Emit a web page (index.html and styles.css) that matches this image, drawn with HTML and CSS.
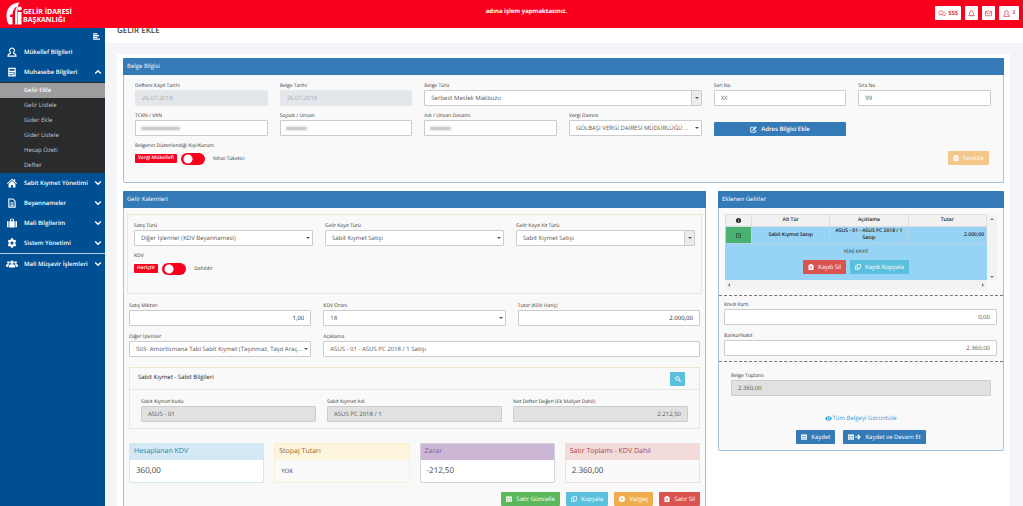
FILE: index.html
```html
<!DOCTYPE html>
<html lang="tr">
<head>
<meta charset="utf-8">
<title>Gelir Ekle</title>
<link rel="stylesheet" href="styles.css">
</head>
<body>
<svg class="defs" aria-hidden="true">
  <symbol id="user" viewBox="0 0 16 16"><path d="M8 1.5a4 4 0 0 1 2.6 7c-.5.5-.4 1.400 .4 1.700 2 .7 3.500 1.500 3.500 4.300h-13c0-2.800 1.500-3.600 3.500-4.300.8-.3.9-1.200.4-1.700A4 4 0 0 1 8 1.500z" fill="none" stroke="currentColor" stroke-width="1.800"/></symbol>
  <symbol id="calc" viewBox="0 0 16 16"><path fill="currentColor" fill-rule="evenodd" d="M2 1h12v14H2zM4 3v3h8V3zM4 8v1.500h2V8zm3 0v1.500h2V8zM4 11.500V13h5v-1.500zM10.500 8v5H12V8z"/></symbol>
  <symbol id="home" viewBox="0 0 16 16"><path fill="currentColor" d="M8 1l3 2.700V2h2v3.500L16 8.300l-1 1.100-7-6.200-7 6.200-1-1.100z"/><path fill="currentColor" d="M8 4.600l5.500 4.900V15h-4v-4h-3v4h-4V9.500z"/></symbol>
  <symbol id="doc" viewBox="0 0 16 16"><path fill="none" stroke="currentColor" stroke-width="1.800" d="M3 1.500h6.500L13 5v9.500H3z"/><path stroke="currentColor" stroke-width="1.400" d="M5.500 7.500h5M5.500 9.700h5M5.500 12h5"/></symbol>
  <symbol id="case" viewBox="0 0 16 16"><path fill="currentColor" d="M0 5h2.500v10H1.500Q0 15 0 13.500zM13.500 5H16v8.500q0 1.500-1.500 1.500h-1zM3.700 5H5V2.500Q5 1 6.500 1h3Q11 1 11 2.500V5h1.300v10H3.700zM6.500 5h3V2.500h-3z"/></symbol>
  <symbol id="gear" viewBox="0 0 16 16"><path fill="currentColor" fill-rule="evenodd" d="M6.500 0.500h3l.4 2 1.400.8 2-.7 1.500 2.600L13.300 6.600v2.800l1.500 1.400-1.500 2.600-2-.7-1.400.8-.4 2h-3l-.4-2-1.400-.8-2 .7L1.200 10.800l1.500-1.400V6.600L1.200 5.200l1.500-2.600 2 .7 1.400-.8zM8 5.500a2.500 2.500 0 1 0 0 5 2.500 2.500 0 0 0 0-5z"/></symbol>
  <symbol id="group" viewBox="0 0 20 14"><g fill="currentColor"><circle cx="10" cy="4" r="3"/><circle cx="4" cy="4.500" r="2.200"/><circle cx="16" cy="4.500" r="2.200"/><path d="M5 13V10.500Q5 7.500 8 7.500h4q3 0 3 3V13zM0 11.500V9.500Q0 7 2.500 7H5Q4 8.500 4 11.500zM20 11.500V9.500Q20 7 17.500 7H15q1 1.500 1 4.500z"/></g></symbol>
  <symbol id="down" viewBox="0 0 10 10"><path d="M1.500 3l3.500 3.500L8.500 3" fill="none" stroke="currentColor" stroke-width="1.800"/></symbol>
  <symbol id="up" viewBox="0 0 10 10"><path d="M1.500 7L5 3.500 8.500 7" fill="none" stroke="currentColor" stroke-width="1.800"/></symbol>
  <symbol id="trash" viewBox="0 0 12 12"><path fill="currentColor" fill-rule="evenodd" d="M4 0h4v1.500h3V12H1V1.500h3zM4 4.500v5h1v-5zm3 0v5h1v-5z"/></symbol>
  <symbol id="copy" viewBox="0 0 12 12"><path fill="none" stroke="currentColor" stroke-width="1.400" d="M4.500 1h6.500v7.500H4.500zM4 3.500H1V11h6.500V9"/></symbol>
  <symbol id="edit" viewBox="0 0 14 14"><path fill="none" stroke="currentColor" stroke-width="1.600" d="M8.500 2.500H1.500v10h10V8"/><path fill="currentColor" d="M5 7.500L11 1l2.300 2.200L7.200 9.500H5z"/></symbol>
  <symbol id="save" viewBox="0 0 12 12"><path fill="currentColor" fill-rule="evenodd" d="M0 1h12v10.500H0zM1.500 4v1.800h2V4zm3.500 0v1.800h2V4zm3.500 0v1.800h2V4zM1.500 7.500v2h2v-2zm3.500 0v2h2v-2zm3.500 0v2h2v-2z"/></symbol>
  <symbol id="arrow" viewBox="0 0 12 12"><path d="M0 6h10M5.500 1.500L10 6l-4.500 4.500" fill="none" stroke="currentColor" stroke-width="2.200"/></symbol>
  <symbol id="search" viewBox="0 0 12 12"><circle cx="4.800" cy="4.800" r="3.500" fill="none" stroke="currentColor" stroke-width="1.800"/><path d="M7.500 7.500L11.200 11.200" stroke="currentColor" stroke-width="2.200"/></symbol>
  <symbol id="eye" viewBox="0 0 14 10"><path fill="currentColor" fill-rule="evenodd" d="M0 5Q3 .5 7 .5T14 5Q11 9.500 7 9.500T0 5zm7-3a3 3 0 1 0 0 6 3 3 0 0 0 0-6z"/><circle cx="7" cy="5" r="1.800" fill="currentColor"/></symbol>
  <symbol id="dot" viewBox="0 0 12 12"><path fill="currentColor" fill-rule="evenodd" d="M6 0a6 6 0 1 0 0 12A6 6 0 0 0 6 0zm0 4a2 2 0 1 1 0 4 2 2 0 0 1 0-4z"/></symbol>
  <symbol id="info" viewBox="0 0 12 12"><path fill="currentColor" fill-rule="evenodd" d="M6 0a6 6 0 1 0 0 12A6 6 0 0 0 6 0zM5.200 2.200h1.600v2H5.200zm0 3h1.600v4.600H5.200z"/></symbol>
  <symbol id="check" viewBox="0 0 12 12"><path fill="none" stroke="currentColor" stroke-width="1.200" d="M1 1.500h10v9.500H1zM3.500 6l2 2 3.500-4"/></symbol>
  <symbol id="chat" viewBox="0 0 16 12"><path fill="none" stroke="currentColor" stroke-width="1.300" d="M6 .8c3 0 5 1.400 5 3.400S9 7.600 6 7.600L2.500 9.200 3 7C1.500 6.500 1 5.300 1 4.200 1 2.200 3 .8 6 .8zM12.500 3.500c3 1 3 4 1 5.200l.5 2-3-1.300c-2 .2-3.500-.3-4.300-1"/></symbol>
  <symbol id="bell" viewBox="0 0 12 12"><path fill="none" stroke="currentColor" stroke-width="1.200" d="M6 1Q9 1.500 9 5t2 4.500H1Q3 8.500 3 5t3-4zM4.800 10q1.200 2 2.400 0"/></symbol>
  <symbol id="mail" viewBox="0 0 14 12"><path fill="none" stroke="currentColor" stroke-width="1.300" d="M1 1.500h12v9H1zM1 3l6 4.500L13 3"/></symbol>
</svg>

<header class="topbar">
  <div class="brand">
    <svg class="brand-mark" viewBox="0 0 32 48"><g fill="#fff"><path d="M27 1C10 2 1 13 1 27c0 9 2 15 5 18h7V30H8c0-2 0-4 1-5h4c0-8 4-14 9-16-3 5-4 9-4 16v20h5V22c0-9 0-16 4-21z"/><path d="M24 20h7v25h-7z"/><circle cx="27.500" cy="13" r="4"/></g></svg>
    <div class="brand-name">GELİR İDARESİ<br>BAŞKANLIĞI</div>
  </div>
  <p class="notice">adına işlem yapmaktasınız.</p>
  <div class="tools">
    <button class="tool"><svg class="wide"><use href="#chat"/></svg>SSS</button>
    <button class="tool" aria-label="Bildirimler"><svg><use href="#bell"/></svg></button>
    <button class="tool" aria-label="Mesajlar"><svg><use href="#mail"/></svg></button>
    <button class="tool account" aria-label="Hesap"><svg><use href="#user"/></svg><small>3</small></button>
  </div>
</header>

<div class="layout">
  <nav class="sidebar">
    <button class="collapse" aria-label="Menüyü daralt"><svg viewBox="0 0 8 8"><path d="M0 1h5M0 3h7M0 5h5M0 7h8" stroke="#fff" stroke-width="1.200"/></svg></button>
    <a class="item" href="#"><svg><use href="#user"/></svg><span>Mükellef Bilgileri</span></a>
    <a class="item" href="#"><svg><use href="#calc"/></svg><span>Muhasebe Bilgileri</span><svg class="chev"><use href="#up"/></svg></a>
    <div class="submenu">
      <a class="active" href="#">Gelir Ekle</a>
      <a href="#">Gelir Listele</a>
      <a href="#">Gider Ekle</a>
      <a href="#">Gider Listele</a>
      <a href="#">Hesap Özeti</a>
      <a href="#">Defter</a>
    </div>
    <a class="item" href="#"><svg><use href="#home"/></svg><span>Sabit Kıymet Yönetimi</span><svg class="chev"><use href="#down"/></svg></a>
    <a class="item" href="#"><svg><use href="#doc"/></svg><span>Beyannameler</span><svg class="chev"><use href="#down"/></svg></a>
    <a class="item" href="#"><svg><use href="#case"/></svg><span>Mali Bilgilerim</span><svg class="chev"><use href="#down"/></svg></a>
    <a class="item" href="#"><svg><use href="#gear"/></svg><span>Sistem Yönetimi</span><svg class="chev"><use href="#down"/></svg></a>
    <a class="item ruled" href="#"><svg class="people"><use href="#group"/></svg><span>Mali Müşavir İşlemleri</span><svg class="chev"><use href="#down"/></svg></a>
  </nav>

  <main class="main">
    <h1 class="page-title">GELİR EKLE</h1>
    <div class="sheet">
      <section class="panel">
        <h2 class="panel-head">Belge Bilgisi</h2>
        <div class="doc-grid">
          <div class="field"><label for="d1">Deftere Kayıt Tarihi</label><input id="d1" class="date" value="26.07.2018" disabled></div>
          <div class="field"><label for="d2">Belge Tarihi</label><input id="d2" class="date" value="26.07.2018" disabled></div>
          <div class="field span2"><label for="d3">Belge Türü</label><div class="select boxed"><select id="d3"><option>Serbest Meslek Makbuzu</option></select></div></div>
          <div class="field"><label for="d4">Seri No</label><input id="d4" value="XX"></div>
          <div class="field"><label for="d5">Sıra No</label><input id="d5" value="99"></div>

          <div class="field"><label for="d6">TCKN / VKN</label><div class="masked"><input id="d6"></div></div>
          <div class="field"><label for="d7">Soyadı / Unvan</label><div class="masked short"><input id="d7"></div></div>
          <div class="field"><label for="d8">Adı / Unvan Devamı</label><div class="masked short"><input id="d8"></div></div>
          <div class="field"><label for="d9">Vergi Dairesi</label><div class="select"><select id="d9"><option>GÖLBAŞI VERGİ DAİRESİ MÜDÜRLÜĞÜ ...</option></select></div></div>
          <button class="btn primary address"><svg><use href="#edit"/></svg>Adres Bilgisi Ekle</button>

          <div class="field row-start span2"><label for="t1">Belgenin Düzenlendiği Kişi/Kurum</label>
            <div class="toggle"><span class="tag">Vergi Mükellefi</span><input id="t1" type="checkbox" class="switch"><span class="off">Nihai Tüketici</span></div></div>
          <div class="clear"><button class="btn warning faded"><svg><use href="#trash"/></svg>Temizle</button></div>
        </div>
      </section>

      <div class="columns">
        <section class="panel">
          <h2 class="panel-head">Gelir Kalemleri</h2>
          <div class="panel-body">
            <div class="group kinds">
              <div class="field"><label for="k1">Satış Türü</label><div class="select"><select id="k1"><option>Diğer İşlemler (KDV Beyannamesi)</option></select></div></div>
              <div class="field"><label for="k2">Gelir Kayıt Türü</label><div class="select"><select id="k2"><option>Sabit Kıymet Satışı</option></select></div></div>
              <div class="field"><label for="k3">Gelir Kayıt Alt Türü</label><div class="select boxed"><select id="k3"><option>Sabit Kıymet Satışı</option></select></div></div>
              <div class="field"><label for="t2">KDV</label>
                <div class="toggle"><span class="tag">Hariçtir</span><input id="t2" type="checkbox" class="switch"><span class="off">Dahildir</span></div></div>
            </div>
            <div class="amounts">
              <div class="field"><label for="a1">Satış Miktarı</label><input id="a1" class="num strong" value="1,00"></div>
              <div class="field"><label for="a2">KDV Oranı</label><div class="select"><select id="a2"><option>18</option></select></div></div>
              <div class="field"><label for="a3">Tutar (KDV Hariç)</label><input id="a3" class="num strong" value="2.000,00"></div>
              <div class="field"><label for="a4">Diğer İşlemler</label><div class="select"><select id="a4"><option>503- Amortismana Tabi Sabit Kıymet (Taşınmaz, Taşıt Araç...</option></select></div></div>
              <div class="field span2"><label for="a5">Açıklama</label><input id="a5" value="ASUS - 01 - ASUS PC 2018 / 1 Satışı"></div>
            </div>
            <div class="group asset">
              <div class="asset-head"><h3>Sabit Kıymet - Sabit Bilgileri</h3><button class="btn info find" aria-label="Ara"><svg><use href="#search"/></svg></button></div>
              <div class="asset-body">
                <div class="field"><label for="s1">Sabit Kıymet Kodu</label><input id="s1" value="ASUS - 01" readonly></div>
                <div class="field"><label for="s2">Sabit Kıymet Adı</label><input id="s2" value="ASUS PC 2018 / 1" readonly></div>
                <div class="field"><label for="s3">Net Defter Değeri (Ek Maliyet Dahil)</label><input id="s3" class="num" value="2.212,50" readonly></div>
              </div>
            </div>
            <div class="cards">
              <div class="card blue"><h3>Hesaplanan KDV</h3><p>360,00</p></div>
              <div class="card yellow"><h3>Stopaj Tutarı</h3><p class="small">YOK</p></div>
              <div class="card purple"><h3>Zarar</h3><p>-212,50</p></div>
              <div class="card red"><h3>Satır Toplamı - KDV Dahil</h3><p>2.360,00</p></div>
            </div>
            <div class="actions">
              <button class="btn success"><svg><use href="#save"/></svg>Satır Güncelle</button>
              <button class="btn info"><svg><use href="#copy"/></svg>Kopyala</button>
              <button class="btn warning"><svg><use href="#dot"/></svg>Vazgeç</button>
              <button class="btn danger"><svg><use href="#trash"/></svg>Satır Sil</button>
            </div>
          </div>
        </section>

        <section class="panel">
          <h2 class="panel-head">Eklenen Gelirler</h2>
          <div class="list">
            <div class="list-view">
              <table>
                <thead><tr><th class="mark"><svg><use href="#info"/></svg></th><th>Alt Tür</th><th>Açıklama</th><th>Tutar</th></tr></thead>
                <tbody>
                  <tr><td class="ok"><svg><use href="#check"/></svg></td><td>Sabit Kıymet Satışı</td><td>ASUS - 01 - ASUS PC 2018 / 1 Satışı</td><td class="sum">2.000,00</td></tr>
                  <tr><td colspan="4" class="detail"><p>YENİ KAYIT</p><div class="pair">
                    <button class="btn danger"><svg><use href="#trash"/></svg>Kaydı Sil</button>
                    <button class="btn info"><svg><use href="#copy"/></svg>Kaydı Kopyala</button></div></td></tr>
                </tbody>
              </table>
              <div class="bar-v"><i class="tri up"></i><i class="tri down"></i></div>
              <div class="bar-h"><i class="tri left"></i><i class="tri right"></i></div>
            </div>
          </div>
          <div class="pay">
            <div class="field"><label for="p1">Kredi Kartı</label><input id="p1" class="num" value="0,00"></div>
            <div class="field"><label for="p2">Banka/Nakit</label><input id="p2" class="num" value="2.360,00"></div>
          </div>
          <div class="total">
            <div class="field"><label for="p3">Belge Toplamı</label><input id="p3" value="2.360,00" readonly></div>
            <a class="view" href="#"><svg><use href="#eye"/></svg>Tüm Belgeyi Görüntüle</a>
            <div class="pair wide">
              <button class="btn primary"><svg><use href="#save"/></svg>Kaydet</button>
              <button class="btn primary"><span class="icons"><svg><use href="#save"/></svg><svg><use href="#arrow"/></svg></span>Kaydet ve Devam Et</button>
            </div>
          </div>
        </section>
      </div>
    </div>
  </main>
</div>
</body>
</html>
```

FILE: styles.css
```css
* { box-sizing: border-box; }
body {
  margin: 0;
  height: 100vh;
  overflow: hidden;
  display: flex;
  flex-direction: column;
  background: #f3f5f9;
  color: #444;
  font: 6px/8px "Open Sans", "Noto Sans", sans-serif;
  text-rendering: geometricPrecision;
}
h1, h2, h3, p { margin: 0; font-weight: 400; }
button, input, select { font: inherit; color: inherit; margin: 0; text-rendering: inherit; }
a { color: inherit; text-decoration: none; }
svg { flex: none; display: block; width: 7px; height: 7px; }
.defs { display: none; }

/* Top bar */
.topbar {
  flex: none;
  height: 28px;
  display: grid;
  grid-template-columns: 1fr auto 1fr;
  background: #f8001d;
  color: #fff;
}
.brand { display: flex; align-items: center; gap: 1px; padding-left: 6px; }
.brand-mark { width: 16px; height: 24px; }
.brand-name { font: 700 7px/8px "Open Sans", sans-serif; padding-top: 5px; }
.notice { font-weight: 700; padding: 7px 0 0 30px; }
.tools { display: flex; justify-content: flex-end; gap: 4px; padding: 6px 4px 0 0; }
.tool {
  height: 14px;
  min-width: 13px;
  padding: 0 3px;
  display: flex;
  align-items: center;
  justify-content: center;
  gap: 2px;
  border: 0;
  border-radius: 1px;
  background: #fff;
  color: #e23a48;
  font-weight: 700;
}
.tool .wide { width: 8px; }
.tool small { font-size: 5px; }
.account { padding: 0 4px; }

/* Navigation */
.layout { flex: 1; display: flex; min-height: 0; }
.sidebar { flex: none; width: 105px; background: #004f92; color: #fff; }
.collapse {
  display: flex;
  justify-content: flex-end;
  width: 100%;
  height: 14px;
  padding: 5px 5px 0 0;
  border: 0;
  background: none;
}
.item {
  display: flex;
  align-items: center;
  height: 20px;
  padding: 0 3px 0 7px;
  gap: 7px;
  font-weight: 600;
}
.item span { flex: 1; min-width: 0; white-space: nowrap; }
.item svg { width: 10px; height: 10px; }
.item .people { width: 12px; margin: 0 -1px; }
.item .chev { width: 8px; height: 8px; margin-left: -7px; }
.ruled { border-top: 1px solid #b9cfe2; }
.submenu { background: #292b2d; padding-top: 1px; }
.submenu a { display: block; line-height: 15px; padding-left: 24px; color: #c5c8ca; }
.submenu .active { background: #9d9d9d; color: #fff; font-weight: 600; }

/* Page */
.main { flex: 1; min-width: 0; }
.page-title {
  height: 15px;
  overflow: hidden;
  padding-left: 12px;
  background: #fff;
  font: 600 8px/6px "Open Sans", sans-serif;
}
.sheet { margin: 11px 13px 0 12px; padding: 4px 6px 0; background: #fff; height: 100%; }
.panel { border: 1px solid #9fc3e0; border-top: 0; border-radius: 2px; background: #f9f9fa; }
.panel-head {
  margin: 0 -1px;
  height: 17px;
  padding-left: 4px;
  border-radius: 1px 1px 0 0;
  background: #337ab7;
  color: #fff;
  font-size: 6px;
  font-weight: 500;
  line-height: 17px;
}
.columns {
  display: grid;
  grid-template-columns: 583fr 286fr;
  gap: 12px;
  margin-top: 8px;
  align-items: start;
}

/* Fields */
.field { min-width: 0; }
.field label { display: block; height: 9px; font-size: 5px; line-height: 10px; white-space: nowrap; color: #333; }
.field input:not([type="checkbox"]), .select select {
  display: block;
  width: 100%;
  height: 16px;
  padding: 0 6px;
  border: 1px solid #ccc;
  border-radius: 1px;
  outline: 0;
  background: #fff;
  color: #555;
}
.field .date:disabled { border-color: #e3e7eb; background: #e3e7eb; color: #a3a8ad; }
.field input:read-only:not(.date):not([type="checkbox"]) { background: #e1e1e1; }
.field .num { text-align: right; }
.field .strong:not([type="checkbox"]) { color: #222; }
.select { position: relative; }
.select select { appearance: none; padding-right: 7px; }
.select::after {
  content: "";
  position: absolute;
  top: 7px;
  right: 3px;
  border: 2px solid transparent;
  border-top-color: #555;
}
.boxed::before {
  content: "";
  position: absolute;
  inset: 1px 1px 1px auto;
  width: 9px;
  background: #ececee;
  border-left: 1px solid #ccc;
}
.masked { position: relative; }
.masked::after {
  content: "";
  position: absolute;
  top: 7px;
  left: 6px;
  width: 39px;
  height: 3px;
  background: #bbb;
  filter: blur(1px);
}
.masked.short::after { width: 21px; }
.toggle { display: flex; align-items: center; gap: 4px; height: 13px; margin-top: 2px; }
.tag {
  height: 9px;
  padding: 0 3px;
  border-radius: 1px;
  background: #f8001d;
  color: #fff;
  font-size: 5px;
  font-weight: 600;
  line-height: 9px;
}
.switch {
  appearance: none;
  width: 24px;
  height: 12px;
  border-radius: 6px;
  background: radial-gradient(circle at 7px 6px, #fff 4px, #f8001d 5px);
}
.off { padding-left: 4px; font-size: 5px; color: #333; }
.span2 { grid-column: span 2; }

/* Buttons */
.btn {
  display: flex;
  align-items: center;
  justify-content: center;
  gap: 4px;
  height: 14px;
  padding: 0 5px;
  border: 0;
  border-radius: 1px;
  color: #fff;
  font-weight: 500;
  white-space: nowrap;
}
.btn svg { width: 6px; height: 6px; }
.primary { background: #337ab7; }
.info { background: #5bc0de; }
.success { background: #5cb85c; }
.warning { background: #f0ad4e; }
.danger { background: #d9534f; }
.faded { opacity: 0.65; }

/* Document panel */
.doc-grid {
  display: grid;
  grid-template-columns: repeat(6, 1fr);
  gap: 5px 12px;
  padding: 6px 12px 17px 11px;
}
.row-start { grid-column: 1 / span 2; }
.address { align-self: end; font-weight: 600; }
.address svg { width: 7px; height: 7px; }
.clear { grid-column: 6; display: flex; justify-content: flex-end; align-items: end; padding-right: 2px; }

/* Income lines */
.panel-body { padding: 6px 3px 12px; }
.group { border: 1px solid #e6e6e6; border-top-color: #f0e6d0; }
.kinds {
  display: grid;
  grid-template-columns: repeat(3, 1fr);
  gap: 5px 12px;
  padding: 6px 6px 18px;
}
.amounts {
  display: grid;
  grid-template-columns: repeat(3, 1fr);
  gap: 6px 12px;
  margin: 7px 2px 0;
}
.asset { margin: 10px 2px 0; }
.asset-head {
  display: flex;
  align-items: center;
  justify-content: space-between;
  height: 22px;
  padding: 0 14px 0 8px;
  border-bottom: 1px solid #e6e6e6;
}
.asset-head h3 { padding-bottom: 4px; font-size: 6px; color: #222; }
.find { width: 15px; }
.asset-body {
  display: grid;
  grid-template-columns: repeat(3, 1fr);
  gap: 11px;
  padding: 7px 11px 6px;
}
.cards { display: grid; grid-template-columns: repeat(4, 1fr); gap: 10px; margin: 14px 2px 0; }
.card { border: 1px solid; border-radius: 1px; background: #fff; }
.card h3 { height: 16px; padding-left: 4px; font-size: 7px; line-height: 16px; }
.card p { height: 22px; padding-left: 6px; font-size: 8px; line-height: 22px; color: #444; }
.card .small { font-size: 6px; }
.blue { border-color: #d0e8f0; }
.blue h3 { background: #d3eaf6; color: #31809f; }
.yellow { border-color: #faf0d0; background: #fafafa; }
.yellow h3 { background: #fdf5dc; color: #8a6d3b; }
.purple { border-color: #d8d0e0; }
.purple h3 { background: #ccb6d6; color: #80639a; }
.red { border-color: #f0dcdc; background: #fafafa; }
.red h3 { background: #f3dbdc; color: #a94442; }
.actions { display: flex; justify-content: flex-end; gap: 6px; margin: 9px 2px 0; }

/* Added income */
.list { padding: 6px 6px 5px; border-bottom: 1px dashed #777; }
.list-view { display: grid; grid-template-columns: 1fr 10px; }
table { width: 100%; border-collapse: collapse; table-layout: fixed; color: #222; font-size: 5px; line-height: 7px; }
th, td { padding: 0 2px; border: 1px solid #b5d3e4; text-align: center; font-weight: 600; }
th { height: 12px; background: #f1f1f1; border-color: #ddd; }
td { height: 17px; background: #96d3f5; }
th svg, td > svg { width: 5px; height: 5px; margin: 0 auto; }
.mark { width: 26px; }
.ok { background: #47b272; }
.sum { text-align: right; }
.detail { height: 36px; border-color: #96d3f5; }
.detail p { margin-bottom: 4px; }
.pair { display: flex; justify-content: center; gap: 4px; }
.pair .btn { font-size: 6px; }
.pair.wide { gap: 8px; }
.bar-v { display: flex; flex-direction: column; justify-content: space-between; align-items: center; padding: 4px 0 2px; background: #f3f3f3; }
.bar-h { display: flex; justify-content: space-between; align-items: center; height: 10px; padding: 0 3px; background: #f3f3f3; }
.tri { border: 2px solid transparent; }
.tri.up { border-top: 0; border-bottom-color: #777; }
.tri.down { border-bottom: 0; border-top-color: #777; }
.tri.left { border-left: 0; border-right-color: #777; }
.tri.right { border-right: 0; border-left-color: #777; }
.pay { display: grid; gap: 6px; padding: 4px 6px 5px 5px; border-bottom: 1px dashed #777; }
.total { display: flex; flex-direction: column; padding: 9px 12px 6px; }
.view { display: flex; align-items: center; align-self: center; margin: 18px 0 8px; color: #2ea0dc; }
.icons { display: flex; gap: 1px; }
```
